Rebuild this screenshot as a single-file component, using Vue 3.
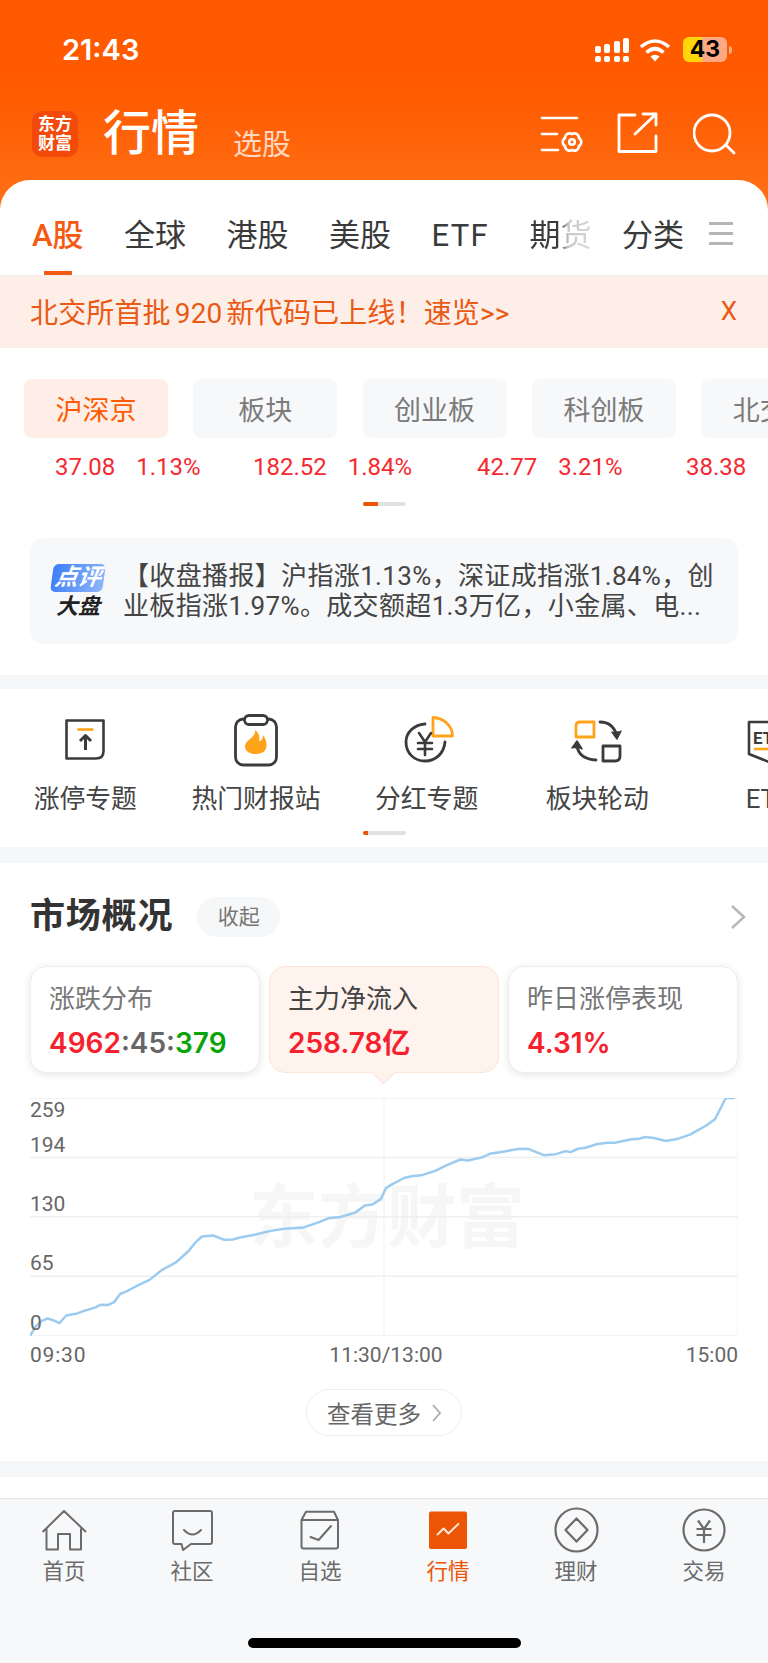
<template>
  <div class="screen">
    <header class="top">
      <div class="status">
        <span class="time">21:43</span>
        <div class="status-right">
          <svg class="signal" width="34" height="24" viewBox="0 0 34 24" fill="#fff">
            <rect x="0" y="8" width="6" height="7" rx="2" /><rect x="9" y="6" width="6" height="9" rx="2" />
            <rect x="19" y="3" width="6" height="12" rx="2" /><rect x="28" y="0" width="6" height="15" rx="2" />
            <rect x="0" y="18" width="6" height="6" rx="2" /><rect x="9" y="18" width="6" height="6" rx="2" />
            <rect x="19" y="18" width="6" height="6" rx="2" /><rect x="28" y="18" width="6" height="6" rx="2" />
          </svg>
          <svg class="wifi" width="32" height="24" viewBox="0 0 32 24" fill="none" stroke="#fff" stroke-width="3.6">
            <path d="M2 9 Q16 -3 30 9" /><path d="M7.5 14.5 Q16 7 24.5 14.5" />
            <path d="M11.5 18.5 L16 23.5 L20.5 18.5 Q16 15 11.5 18.5Z" fill="#fff" stroke="none" />
          </svg>
          <div class="battery"><span>43</span></div>
          <i class="battery-nub"></i>
        </div>
      </div>
      <div class="nav">
        <div class="logo"><span>东方</span><span>财富</span></div>
        <h1>行情</h1>
        <span class="nav-sub">选股</span>
        <svg class="nav-icon gear-ico" width="44" height="44" viewBox="0 0 44 44" fill="none" stroke="#fff" stroke-width="2.6" stroke-linecap="round">
          <path d="M2 6H37M2 22H17M2 38H18" />
          <g transform="translate(32 30)">
            <path d="M6.93 4A4.6 4.6 0 0 1 0 8A4.6 4.6 0 0 1 -6.93 4A4.6 4.6 0 0 1 -6.93 -4A4.6 4.6 0 0 1 0 -8A4.6 4.6 0 0 1 6.93 -4A4.6 4.6 0 0 1 6.93 4Z" />
            <circle r="2.8" />
          </g>
        </svg>
        <svg class="nav-icon share-ico" width="42" height="42" viewBox="0 0 42 42" fill="none" stroke="#fff" stroke-width="2.8" stroke-linecap="round" stroke-linejoin="round">
          <path d="M19 3H3V39.500H40V24" />
          <path d="M19 22L40 2M27 2H40V13" />
        </svg>
        <svg class="nav-icon search-ico" width="44" height="44" viewBox="0 0 44 44" fill="none" stroke="#fff" stroke-width="2.8" stroke-linecap="round">
          <circle cx="19" cy="20" r="18" /><path d="M33 32L41 40" />
        </svg>
      </div>
    </header>

    <main class="sheet">
      <div class="tabs">
        <span v-for="t in tabs" :key="t" class="tab" :class="{ active: t === 'A股', fade: t === '期货', latin: t === 'ETF' }">{{ t }}</span>
        <div class="tab-menu"><i></i><i></i><i></i></div>
      </div>

      <div class="notice">
        <span class="notice-text">北交所首批 920 新代码已上线！速览&gt;&gt;</span>
        <span class="notice-x">X</span>
      </div>

      <section class="index-block">
        <div class="chips">
          <div v-for="(c, i) in chips" :key="c" class="chip" :class="{ on: i === 0 }">{{ c }}</div>
        </div>
        <div class="quotes">
          <div v-for="q in quotes" :key="q[0]" class="quote"><span>{{ q[0] }}</span><span>{{ q[1] }}</span></div>
        </div>
        <div class="dots"><i class="dots-on"></i></div>
        <div class="news">
          <div class="news-logo">
            <span class="news-badge"><b>点评</b></span>
            <b class="news-big">大盘</b>
          </div>
          <div class="news-text">
            <span>【收盘播报】沪指涨1.13%，深证成指涨1.84%，创</span>
            <span>业板指涨1.97%。成交额超1.3万亿，小金属、电...</span>
          </div>
        </div>
      </section>

      <div class="band"></div>

      <section class="shortcuts">
        <div class="short-row">
          <div class="short">
            <svg width="56" height="56" viewBox="0 0 56 56" fill="none" stroke="#3b3b3b" stroke-width="2.6" stroke-linejoin="round">
              <path d="M9.500 6.500H46.500V37Q46.500 44.500 39 44.500H9.500Z" />
              <path d="M20.500 15.500H36.500" stroke="#ffa31a" />
              <path d="M28.500 36V22M23 27L28.500 21.500L34 27" stroke-width="3" />
            </svg>
            <span>涨停专题</span>
          </div>
          <div class="short">
            <svg width="56" height="56" viewBox="0 0 56 56" fill="none" stroke="#3b3b3b" stroke-width="2.8">
              <rect x="7.500" y="5" width="41" height="46" rx="8" fill="#fff" />
              <rect x="16.500" y="1.500" width="23" height="9" rx="4.500" fill="#fff" />
              <path d="M27 16C28 22 22 24 18 29C15 34 19 40 28 40C37 40 40 34 38 27C37 24 36 22 35 21C35 25 33 27 31 27C32 23 31 19 27 16Z" fill="#ffa31a" stroke="none" />
            </svg>
            <span>热门财报站</span>
          </div>
          <div class="short">
            <svg width="56" height="56" viewBox="0 0 56 56" fill="none" stroke="#3b3b3b" stroke-width="2.8" stroke-linecap="round">
              <path d="M26 10C14 11 7 19 7 28C7 39 15 47 26 47C37 47 45 39 46 28" />
              <path d="M34 3.500V22H53.500C53.500 12 45 4 34 3.500Z" stroke="#ffa31a" stroke-linejoin="round" />
              <path d="M20 19L26 28L32 19M19 29H33M19 35H33M26 28V41" stroke-width="2.6" />
            </svg>
            <span>分红专题</span>
          </div>
          <div class="short">
            <svg width="56" height="56" viewBox="0 0 56 56" fill="none" stroke="#3b3b3b" stroke-width="2.8" stroke-linecap="round" stroke-linejoin="round">
              <path d="M7 12Q7 8 11 8H25V23H7Z" stroke="#ffa31a" />
              <path d="M31 8Q44 8 48 22" /><path d="M43 18L48 25L52 17" fill="#3b3b3b" stroke-width="1.500" />
              <path d="M8 32Q10 45 27 46" /><path d="M3 34L8 27L13 35" fill="#3b3b3b" stroke-width="1.500" />
              <path d="M34 32H51V42Q51 47 46 47H34Z" />
            </svg>
            <span>板块轮动</span>
          </div>
          <div class="short">
            <svg width="56" height="56" viewBox="0 0 56 56" fill="none" stroke="#3b3b3b" stroke-width="2.6" stroke-linejoin="round">
              <path d="M9 8H50V40L29 48L9 40Z" />
              <text x="13" y="30" class="et-text">ETF</text>
              <path d="M14 35H44" stroke="#ffa31a" />
            </svg>
            <span>ETF</span>
          </div>
        </div>
        <div class="dots dots-low"><i class="dots-tiny"></i></div>
      </section>

      <div class="band band-b"></div>

      <section class="market">
        <div class="market-head">
          <h2>市场概况</h2>
          <span class="fold">收起</span>
          <svg class="market-more" width="16" height="26" viewBox="0 0 16 26" fill="none" stroke="#b9b9b9" stroke-width="2.600">
            <path d="M2 2L14 13L2 24" />
          </svg>
        </div>
        <div class="cards">
          <div class="card">
            <div class="card-title">涨跌分布</div>
            <div class="card-val"><em>4962</em><u>:45:</u><s>379</s></div>
          </div>
          <div class="card current">
            <div class="card-title">主力净流入</div>
            <div class="card-val"><em>258.78亿</em></div>
            <i class="card-arrow"></i>
          </div>
          <div class="card">
            <div class="card-title">昨日涨停表现</div>
            <div class="card-val"><em>4.31%</em></div>
          </div>
        </div>

        <div class="chart">
          <span class="watermark">东方财富</span>
          <svg class="chart-svg" width="708" height="238" viewBox="61 25 1446 708" preserveAspectRatio="none" fill="none">
            <path d="M61 25H1507M61 202H1507M61 378H1507M61 555H1507M61 733H1507" stroke="#efefef" stroke-width="1.500" vector-effect="non-scaling-stroke" />
            <path d="M784 25V733M1507 25V733" stroke="#efefef" stroke-width="1" vector-effect="non-scaling-stroke" />
            <polyline :points="linePoints" stroke="#9ccbf0" stroke-width="2.500" stroke-linejoin="round" vector-effect="non-scaling-stroke" />
          </svg>
          <span v-for="l in yLabels" :key="l.t" class="y-label" :style="{ top: l.y + 'px' }">{{ l.t }}</span>
        </div>
        <div class="times"><span>09:30</span><span>11:30/13:00</span><span>15:00</span></div>
        <div class="more-wrap">
          <div class="more">
            查看更多
            <svg width="9" height="18" viewBox="0 0 9 18" fill="none" stroke="#aaa" stroke-width="1.800"><path d="M1 1L8 9L1 17" /></svg>
          </div>
        </div>
      </section>

      <div class="band band-b"></div>
    </main>

    <nav class="bar">
      <div class="bar-items">
        <div class="bar-item">
          <svg width="48" height="48" viewBox="0 0 48 48" fill="none" stroke="#6b6b6b" stroke-width="2" stroke-linejoin="round">
            <path d="M2.600 25L24 4L46 25M6.500 21.500V42.500H18V27H30V42.500H41V21.500" />
          </svg>
          <span>首页</span>
        </div>
        <div class="bar-item">
          <svg width="48" height="48" viewBox="0 0 48 48" fill="none" stroke="#6b6b6b" stroke-width="2" stroke-linejoin="round">
            <path d="M7 4H42Q44 4 44 6V35Q44 37 42 37H23L15 43L13.500 37H7Q5 37 5 35V6Q5 4 7 4Z" />
            <path d="M16 23Q24.500 32 33 23" stroke-linecap="round" />
          </svg>
          <span>社区</span>
        </div>
        <div class="bar-item">
          <svg width="48" height="48" viewBox="0 0 48 48" fill="none" stroke="#6b6b6b" stroke-width="2" stroke-linejoin="round">
            <path d="M5.500 13L10 4.700H38L42 13M5.500 13H42V39.500Q42 41.500 40 41.500H7.500Q5.500 41.500 5.500 39.500Z" />
            <path d="M14.500 30L22.600 33L35 19" stroke-linecap="round" />
          </svg>
          <span>自选</span>
        </div>
        <div class="bar-item on">
          <svg width="48" height="48" viewBox="0 0 48 48" fill="none">
            <rect x="5" y="4.500" width="38" height="37.500" rx="2" fill="#eb5505" />
            <path d="M13 28L19.600 21.500L24.500 26.500L35 16.400" stroke="#ffe9dd" stroke-width="2" stroke-linejoin="round" />
          </svg>
          <span>行情</span>
        </div>
        <div class="bar-item">
          <svg width="48" height="48" viewBox="0 0 48 48" fill="none" stroke="#6b6b6b" stroke-width="2.200" stroke-linejoin="round">
            <ellipse cx="24.500" cy="23" rx="21" ry="21.500" />
            <path d="M24.500 11.400L35.500 23L24.500 34.600L13.500 23Z" />
          </svg>
          <span>理财</span>
        </div>
        <div class="bar-item">
          <svg width="48" height="48" viewBox="0 0 48 48" fill="none" stroke="#6b6b6b" stroke-width="2.200">
            <circle cx="24" cy="23" r="20.500" />
            <path d="M18 13.500L24 22L30 13.500M16.500 22H31.500M16.500 28H31.500M24 22V36" />
          </svg>
          <span>交易</span>
        </div>
      </div>
      <div class="home-line"></div>
    </nav>
  </div>
</template>

<script setup>
const tabs = ['A股', '全球', '港股', '美股', 'ETF', '期货', '分类']
const chips = ['沪深京', '板块', '创业板', '科创板', '北交所']
const quotes = [['37.08', '1.13%'], ['182.52', '1.84%'], ['42.77', '3.21%'], ['38.38', '']]
const yLabels = [
  { t: '259', y: -1 },
  { t: '194', y: 34 },
  { t: '130', y: 93 },
  { t: '65', y: 152 },
  { t: '0', y: 212 }
]

// measured off the reference, same units as the svg viewBox
const linePoints = [
  '61,733', '72,705', '85,688', '97,681', '108,686', '121,695', '135,672', '155,667', '170,659', '195,648',
  '205,640', '220,641', '233,632', '245,608', '258,600', '278,585', '305,566', '330,537', '360,513', '385,480',
  '398,456', '412,437', '435,434', '458,447', '475,446', '490,440', '520,432', '550,421', '580,414', '620,410',
  '650,395', '670,383', '695,379', '725,366', '745,345', '760,342', '778,325', '788,293', '800,282', '825,263',
  '840,258', '860,255', '890,241', '910,226', '940,208', '955,211', '985,201', '1000,191', '1030,184', '1060,176',
  '1080,177', '1110,195', '1135,192', '1155,183', '1165,186', '1180,176', '1195,173', '1220,162', '1240,158', '1255,158',
  '1290,148', '1305,146', '1317,141', '1335,144', '1360,153', '1385,146', '1410,133', '1443,106', '1460,88', '1470,60',
  '1482,25', '1500,25'
].join(' ')
</script>

<style>
html, body { margin: 0; background: #fff; }
</style>

<style scoped>
* { box-sizing: border-box; }

.screen {
  width: 768px;
  height: 1663px;
  overflow: hidden;
  display: flex;
  flex-direction: column;
  font-family: Roboto, "Noto Sans CJK SC", sans-serif;
  color: #333;
  background: linear-gradient(#ff5900 0, #ff5a00 90px, #ff7219 215px) no-repeat;
  background-size: 100% 215px;
}

.top { height: 180px; flex: none; color: #fff; }

.status {
  height: 98px;
  padding: 1px 36px 0 62px;
  display: flex;
  align-items: center;
  justify-content: space-between;
}
.time { font: 600 29px/34px Inter, sans-serif; }
.status-right { display: flex; align-items: center; }
.signal { margin-right: 10px; }
.wifi { margin-right: 12px; }
.battery {
  width: 44px;
  height: 25px;
  border-radius: 6px;
  background: linear-gradient(90deg, #ffd60a 0 19px, #ffa982 19px);
  color: #000;
  font: 700 23px/25px Inter, sans-serif;
  text-align: center;
}
.battery-nub { width: 3px; height: 8px; margin-left: 2px; background: #ffa982; border-radius: 0 3px 3px 0; }

.nav { display: flex; align-items: flex-start; padding: 13px 0 0 32px; position: relative; }
.logo {
  width: 46px;
  height: 46px;
  border-radius: 10px;
  background: #f34a0c;
  display: flex;
  flex-direction: column;
  align-items: center;
  justify-content: center;
  font-size: 17px;
  font-weight: 700;
  line-height: 19px;
}
.nav h1 { margin: -12px 0 0 25px; font-size: 48px; font-weight: 500; line-height: 70px; }
.nav-sub { margin: 13px 0 0 34px; font-size: 29px; line-height: 42px; color: rgba(255, 255, 255, 0.75); }
.nav-icon { position: absolute; }
.gear-ico { left: 540px; top: 14px; }
.share-ico { left: 616px; top: 14px; }
.search-ico { left: 693px; top: 15px; }

.sheet {
  flex: 1;
  height: 1318px;
  overflow: hidden;
  background: #fff;
  border-radius: 30px 30px 0 0;
}

.tabs {
  position: relative;
  height: 95px;
  padding: 36px 0 0 32px;
  display: flex;
  gap: 40.500px;
  font-size: 31px;
  line-height: 40px;
  color: #3a3a3a;
}
.tab { flex: none; }
.tab:nth-child(7) { margin-left: -10px; }
.tab.latin { letter-spacing: 1.300px; }
.tab.active { color: #f55a12; font-weight: 500; position: relative; }
.tab.active::after {
  content: "";
  position: absolute;
  left: 12px;
  top: 55px;
  width: 28px;
  height: 4px;
  background: #f55a12;
}
.tab.fade {
  background: linear-gradient(90deg, #3a3a3a 45%, #c8c8c8 62%, #d8d8d8 100%);
  -webkit-background-clip: text;
  background-clip: text;
  color: transparent;
}
.tab-menu { position: absolute; left: 709px; top: 42px; width: 24px; display: flex; flex-direction: column; gap: 7px; }
.tab-menu i { display: block; height: 3px; background: #b5b5b5; }

.notice {
  height: 73px;
  padding: 0 31px 3px;
  background: #fdeee8;
  border-top: 1px solid #eee;
  display: flex;
  align-items: center;
  justify-content: space-between;
  color: #ea5a14;
  font-size: 28px;
}
.notice-text { word-spacing: -3px; letter-spacing: 0.150px; margin-left: -1px; }
.notice-x { font-size: 26px; }

.index-block { padding-top: 31px; height: 327px; }
.chips { display: flex; gap: 25.300px; padding-left: 24px; overflow: hidden; }
.chip {
  flex: none;
  width: 144px;
  height: 59px;
  padding-top: 3px;
  border-radius: 8px;
  background: #f7f8fa;
  color: #7b7b7b;
  font-size: 27px;
  line-height: 59px;
  text-align: center;
}
.chip.on { background: #ffeee7; color: #ff5a00; }

.quotes {
  display: grid;
  grid-template-columns: 198px 224px 209px 200px;
  padding-left: 55px;
  margin-top: 14px;
  height: 30px;
  font-size: 24px;
  line-height: 30px;
  color: #f5292f;
  white-space: nowrap;
}
.quote { display: flex; gap: 21px; }

.dots { position: relative; width: 43px; height: 4px; margin: 20px auto 0; border-radius: 2px; background: #dfe1e5; overflow: hidden; }
.dots-on { position: absolute; left: 0; top: 0; width: 15px; height: 4px; background: #eb5505; }
.dots-tiny { position: absolute; left: 0; top: 0; width: 5px; height: 4px; background: #eb5505; }
.dots-low { margin-top: 17px; }

.news {
  margin: 32px 30px 0;
  height: 106px;
  padding-left: 20px;
  border-radius: 14px;
  background: #f7f8fa;
  display: flex;
  align-items: center;
}
.news-logo { width: 56px; flex: none; display: flex; flex-direction: column; align-items: center; }
.news-badge {
  width: 52px;
  height: 28px;
  border-radius: 5px;
  background: linear-gradient(100deg, #3d7df6, #8db6fb);
  transform: skewX(-8deg);
  color: #fff;
  text-align: center;
}
.news-badge b { display: block; font-size: 23px; font-style: italic; line-height: 28px; }
.news-big { margin-top: 3px; font-size: 22px; font-style: italic; line-height: 24px; color: #222; }
.news-text {
  margin-left: 17px;
  font-size: 26px;
  letter-spacing: 0.350px;
  line-height: 30.500px;
  color: #444;
  white-space: nowrap;
}
.news-text span { display: block; }

.band { height: 14px; background: #f6f7f9; }
.band-b { height: 16px; }

.shortcuts { height: 158px; padding-top: 25px; }
.short-row { display: flex; overflow: hidden; }
.short { flex: none; width: 170.670px; display: flex; flex-direction: column; align-items: center; font-size: 25.800px; color: #444; }
.short svg { display: block; }
.short span { display: block; margin-top: 14px; line-height: 30px; white-space: nowrap; }
.et-text { font: 700 17px Roboto, sans-serif; fill: #3b3b3b; stroke: none; }

.market { height: 598px; padding: 34px 30px 0; }
.market-head { position: relative; display: flex; align-items: center; height: 40px; }
.market-head h2 { margin: 0; font-size: 35px; font-weight: 700; color: #333; letter-spacing: 0.800px; line-height: 40px; }
.fold {
  margin-left: 24px;
  width: 83px;
  height: 40px;
  border-radius: 20px;
  background: #f6f7f9;
  color: #777;
  font-size: 21px;
  line-height: 40px;
  text-align: center;
}
.market-more { position: absolute; right: -8px; top: 7px; }

.cards { display: grid; grid-template-columns: repeat(3, 230px); gap: 9px; margin-top: 29px; }
.card {
  position: relative;
  height: 107px;
  padding: 17px 18px 0;
  border-radius: 16px;
  border: 1px solid #eee;
  background: #fff;
  box-shadow: 0 2px 8px rgba(0, 0, 0, 0.1);
}
.card.current { background: #fff3ee; border-color: #fde4da; box-shadow: none; }
.card-title { font-size: 26px; line-height: 30px; color: #777; }
.current .card-title { color: #444; }
.card-val { margin-top: 13px; font: 600 28px/32px Inter, "Noto Sans CJK SC", sans-serif; }
.card-val em { font-style: normal; color: #f5222d; }
.card-val u { text-decoration: none; color: #666; }
.card-val s { text-decoration: none; color: #0aa30a; }
.card-arrow {
  position: absolute;
  left: 105px;
  bottom: -9px;
  width: 17px;
  height: 17px;
  background: #fff3ee;
  border-right: 1px solid #fde4da;
  border-bottom: 1px solid #fde4da;
  transform: rotate(45deg);
}

.chart { position: relative; width: 708px; height: 238px; margin-top: 25px; }
.chart-svg { display: block; position: relative; }
.watermark {
  position: absolute;
  left: 219px;
  top: 83px;
  font-size: 69px;
  font-weight: 700;
  line-height: 76px;
  color: #f6f6f6;
  white-space: nowrap;
}
.y-label { position: absolute; left: 0; font-size: 21px; line-height: 26px; color: #666; }

.times {
  display: flex;
  justify-content: space-between;
  margin-top: 6px;
  height: 26px;
  font-size: 21px;
  line-height: 26px;
  color: #666;
}
.times span:first-child { letter-spacing: 0.800px; }

.more-wrap { display: flex; justify-content: center; margin-top: 21px; }
.more {
  width: 156px;
  height: 47px;
  border: 1.500px solid #eee;
  border-radius: 24px;
  display: flex;
  align-items: center;
  justify-content: center;
  gap: 11px;
  font-size: 23.500px;
  color: #666;
}

.bar {
  flex: none;
  height: 165px;
  background: #f7f8fa;
  border-top: 1.500px solid #e2e2e2;
  position: relative;
}
.bar-items { display: flex; padding-top: 8px; }
.bar-item { width: 128px; display: flex; flex-direction: column; align-items: center; font-size: 21.500px; color: #6b6b6b; }
.bar-item svg { display: block; }
.bar-item span { margin-top: 3px; line-height: 28px; }
.bar-item.on { color: #eb5505; }
.home-line {
  position: absolute;
  left: 248px;
  top: 139px;
  width: 273px;
  height: 10px;
  border-radius: 5px;
  background: #000;
}
</style>
